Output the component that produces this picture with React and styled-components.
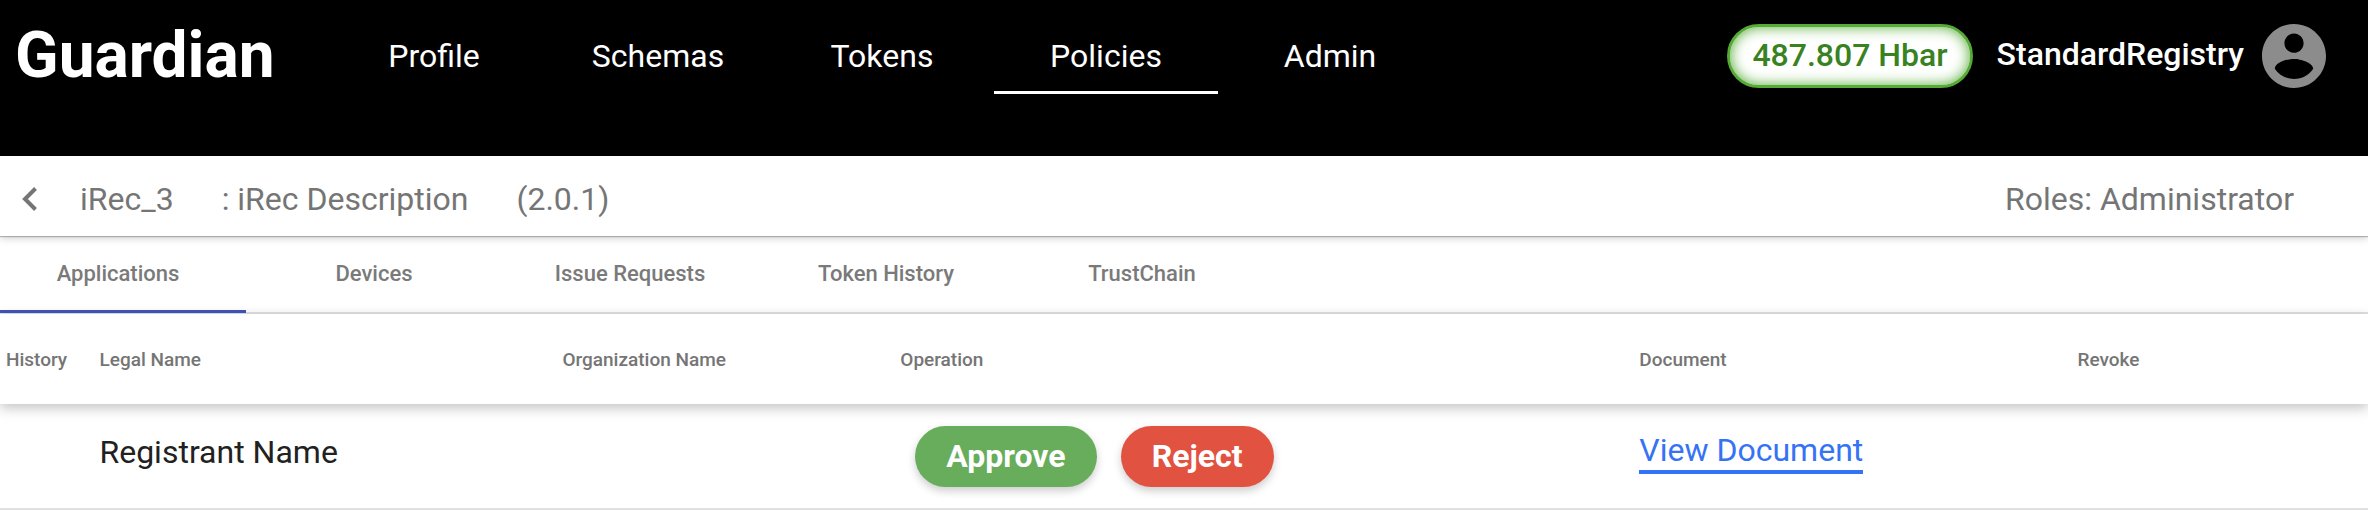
import React from "react";
import styled, { createGlobalStyle } from "styled-components";

const GlobalStyle = createGlobalStyle`
  *, *::before, *::after { box-sizing: border-box; }
  body {
    margin: 0;
    background: #fff;
    font-family: Roboto, "Liberation Sans", sans-serif;
    font-size: 32px;
    line-height: 40px;
    color: #212121;
    overflow-x: hidden;
  }
`;

const Header = styled.header`
  display: flex;
  align-items: flex-start;
  min-height: 156px;
  padding-right: 42px;
  background: #000;
  color: #fff;
`;

const Brand = styled.a`
  width: 322px;
  flex: none;
  padding: 20px 0 0 15px;
  color: inherit;
  font-size: 64px;
  line-height: 72px;
  font-weight: 700;
  text-decoration: none;
`;

const Nav = styled.nav`
  display: flex;
`;

const NavLink = styled.a`
  width: 224px;
  height: 94px;
  padding-top: 36px;
  border-bottom: 3px solid ${({ $active }) => ($active ? "#fff" : "transparent")};
  color: inherit;
  text-align: center;
  text-decoration: none;
`;

const Account = styled.div`
  display: flex;
  align-items: center;
  margin: 24px 0 0 auto;
  font-weight: 500;
`;

const Balance = styled.div`
  display: flex;
  align-items: center;
  height: 64px;
  padding: 0 22px 2px;
  margin-right: 24px;
  border: 3px solid #55ab35;
  border-radius: 32px;
  background: #fff;
  box-shadow: inset 0 0 14px #55ab35;
  color: #38821f;
  white-space: nowrap;
`;

const Username = styled.span`
  margin-right: 18px;
  padding-bottom: 4px;
`;

const AvatarButton = styled.button`
  display: block;
  width: 64px;
  height: 64px;
  padding: 0;
  border: 0;
  background: none;
  color: #8c8c8c;
  cursor: pointer;

  svg { display: block; }
`;

const PolicyBar = styled.section`
  position: relative;
  z-index: 1;
  display: flex;
  align-items: center;
  gap: 48px;
  height: 80px;
  padding: 6px 74px 0 18px;
  background: #fff;
  box-shadow: 0 1px 1px rgba(0, 0, 0, 0.24), 0 2px 8px rgba(0, 0, 0, 0.2);
  color: #757575;
  white-space: nowrap;
`;

const PolicyTitle = styled.h1`
  margin: 0;
  font: inherit;
`;

const BackButton = styled.button`
  width: 24px;
  height: 28px;
  margin-right: -10px;
  padding: 0;
  border: 0;
  background: none;
  color: inherit;
  cursor: pointer;

  svg { display: block; }
`;

const Roles = styled.span`
  margin-left: auto;
`;

const TabStrip = styled.div`
  display: flex;
  height: 78px;
  margin-left: -10px;
  border-bottom: 2px solid #e0e0e0;
`;

const Tab = styled.button`
  width: 256px;
  height: 77px;
  padding: 2px 0 0;
  border: 0;
  border-bottom: 3px solid ${({ $active }) => ($active ? "#3f51b5" : "transparent")};
  background: none;
  color: #7a7a7a;
  font: 500 22px/28px Roboto, "Liberation Sans", sans-serif;
  cursor: pointer;
`;

const DocumentTable = styled.table`
  width: 100%;
  table-layout: fixed;
  border-collapse: separate;
  border-spacing: 0;
  white-space: nowrap;
`;

const Column = styled.col`
  width: ${({ $width }) => $width};
`;

const HeadRow = styled.tr`
  box-shadow: 0 4px 12px rgba(0, 0, 0, 0.24);
`;

const HeadCell = styled.th`
  height: 90px;
  padding: 2px 0 0 ${({ $inset }) => ($inset ? "6px" : "0")};
  color: #757575;
  font-size: 19px;
  line-height: 24px;
  font-weight: 500;
  text-align: left;
`;

const Cell = styled.td`
  height: 106px;
  padding: 0 0 ${({ $text }) => ($text ? "8px" : "0")};
  border-bottom: 2px solid #e0e0e0;
  vertical-align: middle;
`;

const Actions = styled.div`
  display: flex;
  gap: 24px;
  padding-left: 15px;
`;

const ActionButton = styled.button`
  height: 61px;
  padding: 0 31px;
  border: 0;
  border-radius: 31px;
  background: ${({ $tone }) => ($tone === "approve" ? "#67ad5b" : "#e15241")};
  box-shadow: 0 4px 8px rgba(0, 0, 0, 0.2);
  color: #fff;
  font: 700 32px/40px Roboto, "Liberation Sans", sans-serif;
  cursor: pointer;
`;

const DocumentLink = styled.a`
  display: inline-block;
  border-bottom: 4px solid #3573f5;
  color: #3573f5;
  text-decoration: none;
`;

const navItems = ["Profile", "Schemas", "Tokens", "Policies", "Admin"];
const tabs = ["Applications", "Devices", "Issue Requests", "Token History", "TrustChain"];
const columns = [
  { label: "History", width: "4.2%" },
  { label: "Legal Name", width: "19.55%" },
  { label: "Organization Name", width: "14.27%" },
  { label: "Operation", width: "31.21%" },
  { label: "Document", width: "18.5%" },
  { label: "Revoke", width: "12.27%" },
];

export default function App() {
  return (
    <>
      <GlobalStyle />
      <Header>
        <Brand href="#">Guardian</Brand>
        <Nav>
          {navItems.map((item) => (
            <NavLink key={item} href="#" $active={item === "Policies"}>
              {item}
            </NavLink>
          ))}
        </Nav>
        <Account>
          <Balance>487.807 Hbar</Balance>
          <Username>StandardRegistry</Username>
          <AvatarButton aria-label="Account">
            <svg width="64" height="64" viewBox="2 2 20 20" fill="currentColor">
              <path d="M12 2C6.48 2 2 6.48 2 12s4.48 10 10 10 10-4.48 10-10S17.52 2 12 2zm0 3c1.66 0 3 1.34 3 3s-1.34 3-3 3-3-1.34-3-3 1.34-3 3-3zm0 14.2c-2.5 0-4.71-1.28-6-3.22.03-1.99 4-3.08 6-3.08 1.99 0 5.97 1.09 6 3.08-1.29 1.94-3.5 3.22-6 3.22z" />
            </svg>
          </AvatarButton>
        </Account>
      </Header>
      <main>
        <PolicyBar>
          <BackButton aria-label="Back">
            <svg width="24" height="28" viewBox="0 0 24 28" fill="none" stroke="currentColor" strokeWidth="4">
              <path d="M17.5 3.5 7 14l10.500 10.500" />
            </svg>
          </BackButton>
          <PolicyTitle>iRec_3</PolicyTitle>
          <span>: iRec Description</span>
          <span>(2.0.1)</span>
          <Roles>Roles: Administrator</Roles>
        </PolicyBar>
        <TabStrip role="tablist">
          {tabs.map((tab, i) => (
            <Tab key={tab} role="tab" aria-selected={i === 0} $active={i === 0}>
              {tab}
            </Tab>
          ))}
        </TabStrip>
        <DocumentTable>
          <colgroup>
            {columns.map(({ label, width }) => (
              <Column key={label} $width={width} />
            ))}
          </colgroup>
          <thead>
            <HeadRow>
              {columns.map(({ label }, i) => (
                <HeadCell key={label} scope="col" $inset={i === 0}>
                  {label}
                </HeadCell>
              ))}
            </HeadRow>
          </thead>
          <tbody>
            <tr>
              <Cell />
              <Cell $text>Registrant Name</Cell>
              <Cell />
              <Cell>
                <Actions>
                  <ActionButton $tone="approve">Approve</ActionButton>
                  <ActionButton $tone="reject">Reject</ActionButton>
                </Actions>
              </Cell>
              <Cell $text>
                <DocumentLink href="#">View Document</DocumentLink>
              </Cell>
              <Cell />
            </tr>
          </tbody>
        </DocumentTable>
      </main>
    </>
  );
}
